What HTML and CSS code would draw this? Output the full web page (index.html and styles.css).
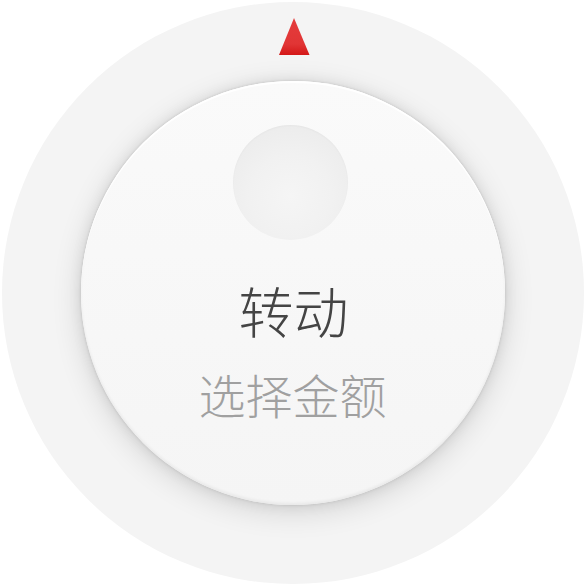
FILE: index.html
```html
<!DOCTYPE html>
<html lang="zh">
<head>
<meta charset="utf-8">
<link rel="stylesheet" href="styles.css">
</head>
<body>
<div class="dial">
  <svg class="pointer" width="32" height="38" viewBox="0 0 32 38">
    <defs>
      <linearGradient id="pg" x1="0" y1="0" x2="0" y2="1">
        <stop offset="0" stop-color="#e43c3c"/>
        <stop offset="0.7" stop-color="#e13535"/>
        <stop offset="1" stop-color="#d41818"/>
      </linearGradient>
    </defs>
    <polygon points="15,0 30.5,37 0,37" fill="url(#pg)"/>
  </svg>
  <div class="knob">
    <div class="hole"></div>
    <div class="title">转动</div>
    <div class="sub">选择金额</div>
  </div>
</div>
</body>
</html>
```
FILE: styles.css
```css
html, body {
  margin: 0;
  padding: 0;
  background: #ffffff;
}
body {
  width: 585px;
  height: 585px;
  display: flex;
  align-items: center;
  justify-content: center;
  font-family: "Noto Sans CJK SC", "Noto Sans", sans-serif;
}
.dial {
  position: relative;
  width: 582px;
  height: 582px;
  border-radius: 50%;
  background: #f4f4f4;
  display: flex;
  align-items: center;
  justify-content: center;
}
.pointer {
  position: absolute;
  top: 16px;
  left: 277px;
}
.knob {
  width: 424px;
  height: 424px;
  border-radius: 50%;
  background: linear-gradient(#fafafa, #f5f5f5);
  box-shadow:
    0 0 3px rgba(0,0,0,0.14),
    0 0 14px rgba(0,0,0,0.08),
    0 6px 30px rgba(0,0,0,0.14),
    inset 0 2px 1px #ffffff,
    inset 0 -2px 3px rgba(0,0,0,0.05);
  display: flex;
  flex-direction: column;
  align-items: center;
  box-sizing: border-box;
  padding-top: 44px;
}
.hole {
  width: 115px;
  height: 115px;
  border-radius: 50%;
  margin-left: -4px;
  background: radial-gradient(circle at 50% 62%, #f5f5f5 0%, #f1f1f1 45%, #e9e9e9 100%);
  box-shadow: inset 0 1px 2px rgba(0,0,0,0.03);
}
.title {
  margin-top: 42px;
  font-size: 55px;
  font-weight: 300;
  line-height: 1;
  color: #444444;
  margin-left: 2px;
}
.sub {
  margin-top: 33px;
  font-size: 47px;
  font-weight: 300;
  line-height: 1;
  color: #a0a0a0;
}
```
